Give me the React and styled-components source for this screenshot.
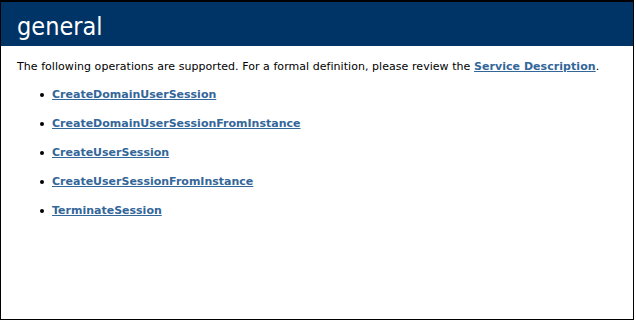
import styled, { createGlobalStyle } from "styled-components";

const Global = createGlobalStyle`
  html, body {
    margin: 0;
    padding: 0;
    background: #ffffff;
  }
  body {
    font-family: "DejaVu Sans", Verdana, sans-serif;
  }
`;

const Frame = styled.div`
  box-sizing: border-box;
  width: 634px;
  height: 320px;
  border: 1px solid #000000;
  border-top-width: 2px;
  background: #ffffff;
  overflow: hidden;
`;

const Heading = styled.h1`
  margin: 0;
  height: 44px;
  box-sizing: border-box;
  padding: 11px 0 0 16px;
  background: #003366;
  color: #ffffff;
  font-family: "DejaVu Sans Condensed", Tahoma, sans-serif;
  font-weight: normal;
  font-size: 25px;
  line-height: 28px;
`;

const Content = styled.div`
  padding: 14px 0 0 16px;
  font-size: 11px;
  color: #000000;
`;

const Intro = styled.p`
  margin: 0;
  line-height: 14px;
  letter-spacing: 0.05px;
`;

const OpList = styled.ul`
  margin: 14px 0 0;
  padding: 0 0 0 35px;
  list-style: none;
`;

const OpItem = styled.li`
  position: relative;
  height: 29px;
  line-height: 14px;
  &::before {
    content: "";
    position: absolute;
    left: -12px;
    top: 5px;
    width: 4px;
    height: 4px;
    border-radius: 50%;
    background: #000000;
  }
`;

const Link = styled.a`
  color: #336699;
  font-weight: bold;
  text-decoration: underline;
`;

const operations = [
  "CreateDomainUserSession",
  "CreateDomainUserSessionFromInstance",
  "CreateUserSession",
  "CreateUserSessionFromInstance",
  "TerminateSession",
];

const App = () => {
  return (
    <>
      <Global />
      <Frame>
        <Heading>general</Heading>
        <Content>
          <Intro>
            The following operations are supported. For a formal definition, please review the{" "}
            <Link href="#">Service Description</Link>.
          </Intro>
          <OpList>
            {operations.map((op) => (
              <OpItem key={op}>
                <Link href="#">{op}</Link>
              </OpItem>
            ))}
          </OpList>
        </Content>
      </Frame>
    </>
  );
};

export default App;
